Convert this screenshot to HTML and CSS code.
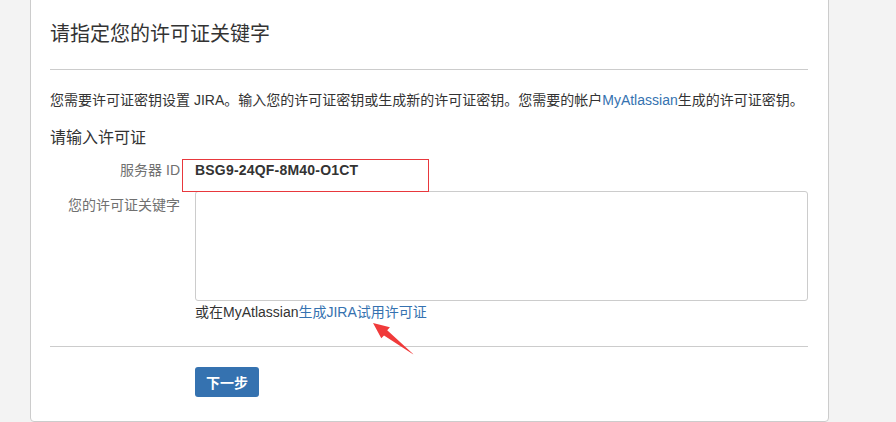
FILE: index.html
```html
<!DOCTYPE html>
<html lang="zh-CN">
<head>
    <meta charset="UTF-8">
    <title>JIRA - 许可证</title>
    <link rel="stylesheet" href="styles.css">
</head>
<body>
    <div class="panel">
        <h1 class="panel-title">请指定您的许可证关键字</h1>
        <hr class="rule">
        <p class="intro">您需要许可证密钥设置 JIRA。输入您的许可证密钥或生成新的许可证密钥。您需要的帐户<a href="#">MyAtlassian</a>生成的许可证密钥。</p>

        <h2 class="section-title">请输入许可证</h2>

        <div class="field">
            <label class="field-label">服务器 ID</label>
            <div class="field-value server-id">BSG9-24QF-8M40-O1CT</div>
        </div>

        <div class="field">
            <label class="field-label label-top" for="licenseKey">您的许可证关键字</label>
            <div class="field-value">
                <textarea id="licenseKey" class="license-input"></textarea>
                <div class="field-desc">或在MyAtlassian<a href="#">生成JIRA试用许可证</a></div>
            </div>
        </div>

        <hr class="rule rule-bottom">

        <div class="buttons">
            <button class="btn-primary">下一步</button>
        </div>
    </div>

    <!-- screenshot annotations -->
    <div class="mark-box"></div>
    <svg class="mark-arrow" width="896" height="422" viewBox="0 0 896 422">
        <polygon points="373,323 381.3,338.3 384,335.4 413.4,354.6 412.6,353.4 387.2,330.2 389.9,327.3" fill="#f03a3a"/>
    </svg>
</body>
</html>
```

FILE: styles.css
```css
body {
    margin: 0;
    background: #f3f3f3;
    font-family: "Liberation Sans", "Noto Sans CJK SC", sans-serif;
    font-size: 14px;
    color: #333;
}

a {
    color: #3572b0;
    text-decoration: none;
}

.panel {
    box-sizing: border-box;
    width: 799px;
    margin: -6px 0 0 30px;
    padding: 24px 20px 24px 19px;
    background: #fff;
    border: 1px solid #ccc;
    border-radius: 4px;
}

.panel-title {
    margin: 0;
    font-size: 20px;
    font-weight: normal;
    line-height: 30px;
}

.rule {
    margin: 20px 0 0;
    border: 0;
    border-top: 1px solid #ccc;
    height: 0;
}

.intro {
    margin: 20px 0 0;
    line-height: 20px;
}

.section-title {
    margin: 16px 0 0;
    font-size: 16px;
    font-weight: normal;
    line-height: 24px;
}

.field {
    display: grid;
    grid-template-columns: 130px 1fr;
    column-gap: 15px;
    margin-top: 10px;
}

.field + .field {
    margin-top: 11px;
}

.field-label {
    text-align: right;
    color: #707070;
    line-height: 20px;
}

.label-top {
    padding-top: 4px;
}

.server-id {
    font-weight: bold;
    line-height: 20px;
    letter-spacing: 0.2px;
}

.license-input {
    display: block;
    box-sizing: border-box;
    width: 613px;
    height: 110px;
    margin: 0;
    border: 1px solid #ccc;
    border-radius: 3px;
    resize: none;
}

.field-desc {
    margin-top: 1px;
    line-height: 20px;
}

.rule-bottom {
    margin-top: 24px;
}

.buttons {
    margin: 20px 0 0 145px;
}

.btn-primary {
    width: 64px;
    height: 30px;
    background: #3572b0;
    color: #fff;
    border: 0;
    border-radius: 3px;
    font-family: inherit;
    font-size: 14px;
    font-weight: bold;
    padding: 0;
}

.mark-box {
    position: absolute;
    left: 182px;
    top: 159px;
    width: 245px;
    height: 31px;
    border: 1px solid #e8383d;
}

.mark-arrow {
    position: absolute;
    left: 0;
    top: 0;
    pointer-events: none;
}
```
